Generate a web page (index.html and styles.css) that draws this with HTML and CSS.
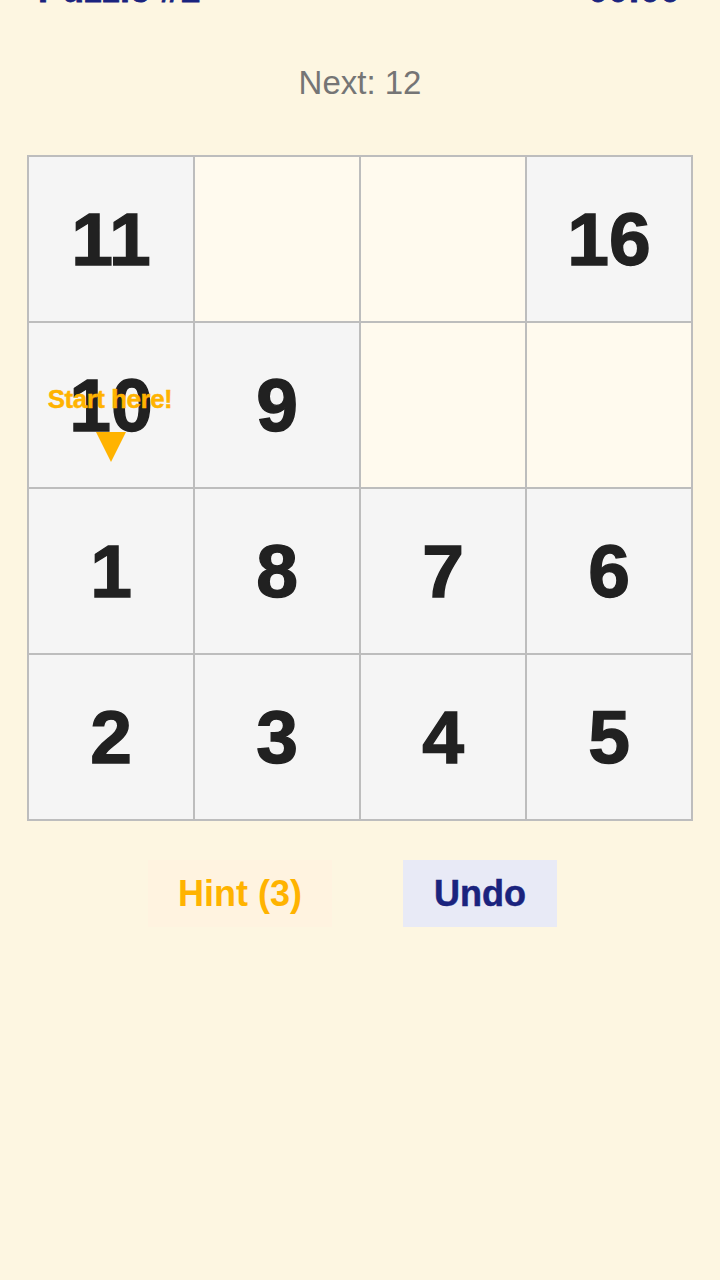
FILE: index.html
```
<!DOCTYPE html>
<html lang="en">
<head>
<meta charset="utf-8">
<title>Puzzle #1</title>
<link rel="stylesheet" href="styles.css">
</head>
<body>
<main class="page">
  <header class="top">
    <span class="title">Puzzle #1</span>
    <span class="timer">00:00</span>
  </header>
  <div class="next">Next: 12</div>
  <div class="board">
    <div class="cell filled">11</div>
    <div class="cell empty"></div>
    <div class="cell empty"></div>
    <div class="cell filled">16</div>
    <div class="cell filled start">10
      <div class="tip"><span class="tip-label">Start here!</span><span class="tip-arrow"></span></div>
    </div>
    <div class="cell filled">9</div>
    <div class="cell empty"></div>
    <div class="cell empty"></div>
    <div class="cell filled">1</div>
    <div class="cell filled">8</div>
    <div class="cell filled">7</div>
    <div class="cell filled">6</div>
    <div class="cell filled">2</div>
    <div class="cell filled">3</div>
    <div class="cell filled">4</div>
    <div class="cell filled">5</div>
  </div>
  <div class="actions">
    <button class="btn hint">Hint (3)</button>
    <button class="btn undo">Undo</button>
  </div>
</main>
</body>
</html>
```
FILE: styles.css
```
html, body {
  margin: 0;
  padding: 0;
  background: #fdf6e1;
  font-family: "Liberation Sans", Arial, sans-serif;
}
.page {
  width: 720px;
  height: 1280px;
  overflow: hidden;
}
.top {
  display: flex;
  justify-content: space-between;
  align-items: baseline;
  margin-top: -28px;
  padding: 0 40px 0 38px;
  font-size: 36px;
  line-height: 36px;
  font-weight: bold;
  color: #1a237e;
  -webkit-text-stroke: 0.8px #1a237e;
}
.next {
  margin-top: 57px;
  text-align: center;
  font-size: 33px;
  line-height: 36px;
  color: #757575;
}
.board {
  margin: 54px 27px 0;
  display: grid;
  grid-template-columns: repeat(4, 164px);
  grid-auto-rows: 164px;
  gap: 2px;
  padding: 2px;
  background: #bdbdbd;
  width: 662px;
}
.cell {
  display: flex;
  align-items: center;
  justify-content: center;
  font-size: 75px;
  font-weight: bold;
  color: #212121;
  -webkit-text-stroke: 1.4px #212121;
  position: relative;
}
.filled { background: #f5f5f5; }
.empty { background: #fffaee; }
.tip {
  position: absolute;
  top: 62px;
  left: 0;
  right: 0;
  display: flex;
  flex-direction: column;
  align-items: center;
  -webkit-text-stroke: 0;
}
.tip-label {
  font-size: 26px;
  line-height: 28px;
  font-weight: bold;
  color: #ffb300;
  letter-spacing: -0.5px;
  white-space: nowrap;
  margin-left: -2px;
  -webkit-text-stroke: 0.4px #ffb300;
}
.tip-arrow {
  margin-top: 19px;
  width: 0;
  height: 0;
  border-left: 15px solid transparent;
  border-right: 15px solid transparent;
  border-top: 30px solid #ffb300;
}
.actions {
  margin-top: 39px;
  display: flex;
  justify-content: center;
  gap: 71px;
  padding-right: 15px;
}
.btn {
  border: none;
  height: 67px;
  font-family: "Liberation Sans", Arial, sans-serif;
  font-size: 36px;
  font-weight: bold;
  padding: 0;
}
.hint {
  width: 184px;
  background: #fff3e0;
  color: #ffb300;
}
.undo {
  width: 154px;
  background: #e8eaf6;
  color: #1a237e;
  -webkit-text-stroke: 0.5px #1a237e;
}
```
